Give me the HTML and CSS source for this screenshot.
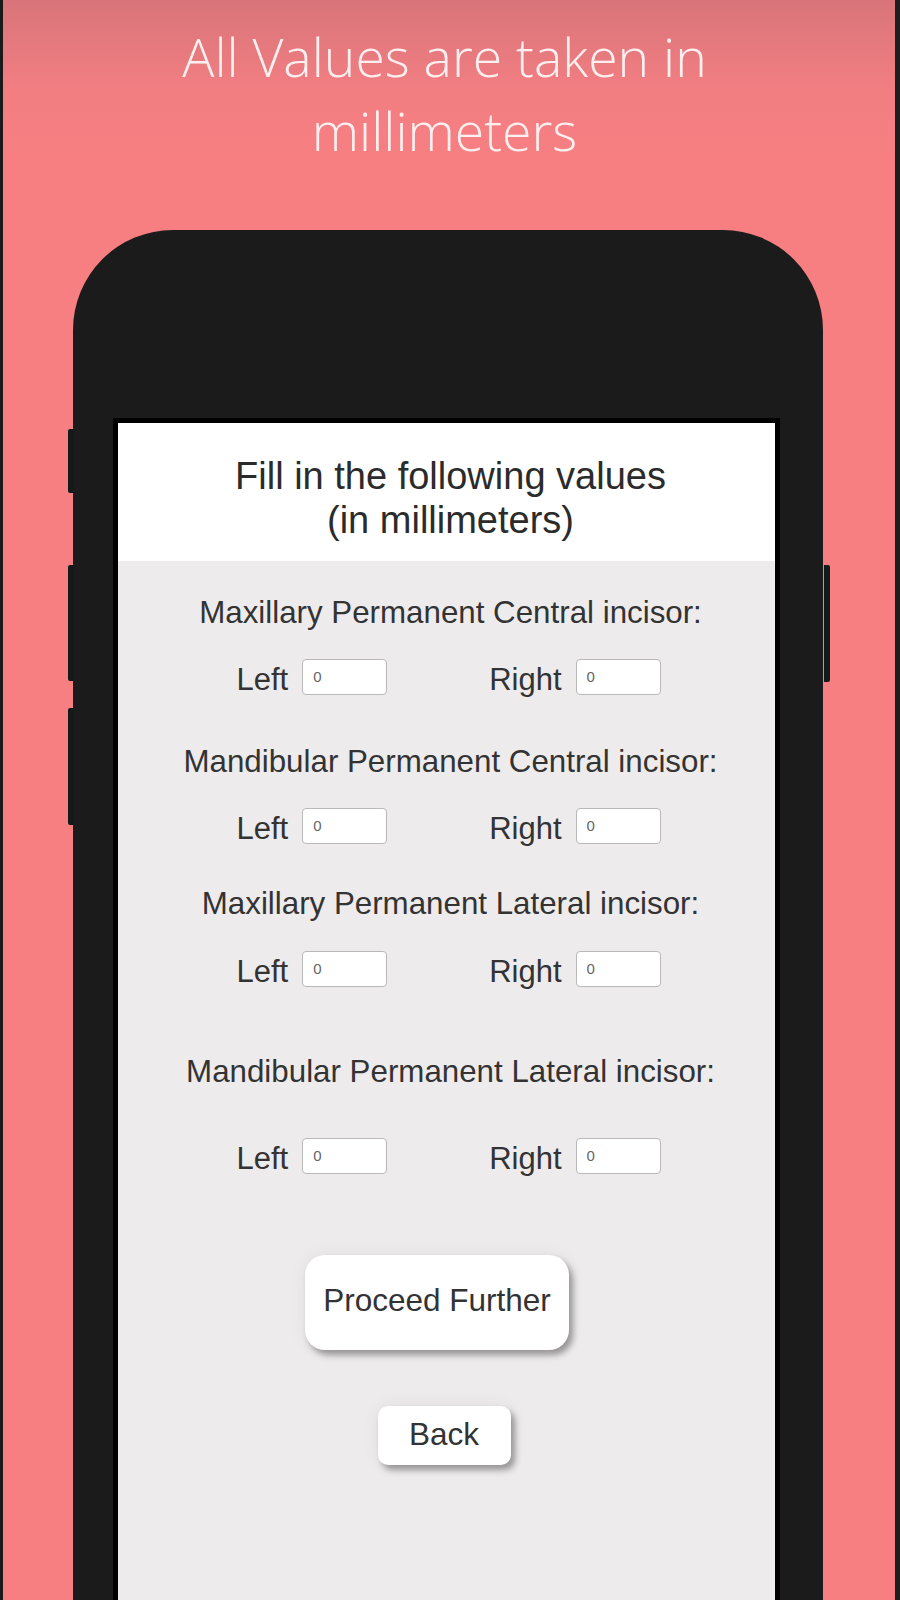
FILE: index.html
```html
<!DOCTYPE html>
<html lang="en">
<head>
<meta charset="utf-8">
<title>Fill in values</title>
<link rel="stylesheet" href="styles.css">
</head>
<body>
<div class="page">
  <h1 class="title">All Values are taken in<br>millimeters</h1>
  <div class="phone">
    <span class="side-btn side-l1"></span>
    <span class="side-btn side-l2"></span>
    <span class="side-btn side-l3"></span>
    <span class="side-btn side-r1"></span>
    <div class="screen">
      <div class="header">Fill in the following values<br>(in millimeters)</div>
      <div class="form">
        <div class="label l1">Maxillary Permanent Central incisor:</div>
        <div class="row r1">
          <div class="pair"><span class="side">Left</span><input class="box" type="text" value="0"></div>
          <div class="pair"><span class="side">Right</span><input class="box" type="text" value="0"></div>
        </div>
        <div class="label l2">Mandibular Permanent Central incisor:</div>
        <div class="row r2">
          <div class="pair"><span class="side">Left</span><input class="box" type="text" value="0"></div>
          <div class="pair"><span class="side">Right</span><input class="box" type="text" value="0"></div>
        </div>
        <div class="label l3">Maxillary Permanent Lateral incisor:</div>
        <div class="row r3">
          <div class="pair"><span class="side">Left</span><input class="box" type="text" value="0"></div>
          <div class="pair"><span class="side">Right</span><input class="box" type="text" value="0"></div>
        </div>
        <div class="label l4">Mandibular Permanent Lateral incisor:</div>
        <div class="row r4">
          <div class="pair"><span class="side">Left</span><input class="box" type="text" value="0"></div>
          <div class="pair"><span class="side">Right</span><input class="box" type="text" value="0"></div>
        </div>
        <button class="btn btn-proceed" type="button">Proceed Further</button>
        <button class="btn btn-back" type="button">Back</button>
      </div>
    </div>
  </div>
</div>
</body>
</html>
```
FILE: styles.css
```css
html, body {
  margin: 0;
  padding: 0;
}
body {
  width: 900px;
  height: 1600px;
  overflow: hidden;
  background: #1b1b1b;
}
.page {
  box-sizing: border-box;
  width: 900px;
  height: 1600px;
  border-left: 3px solid #1a1a1a;
  border-right: 5px solid #1e1e1e;
  background: linear-gradient(to bottom, #d8757a 0px, #f27e82 90px, #f77f82 160px, #f77f82 100%);
  overflow: hidden;
}
.title {
  margin: 0 6px 0 -3px;
  padding-top: 20px;
  height: 210px;
  text-align: center;
  font-family: "Open Sans", sans-serif;
  font-weight: 300;
  font-size: 53.5px;
  line-height: 74px;
  letter-spacing: 0;
  color: #fcefef;
}
.phone {
  position: relative;
  box-sizing: border-box;
  margin-left: 70px;
  width: 750px;
  height: 1400px;
  background: #1b1b1b;
  border-radius: 100px 100px 0 0;
  padding: 188px 43px 0 40px;
}
.side-btn {
  position: absolute;
  width: 6px;
  background: #141a19;
}
.side-l1 { left: -5px; top: 199px; height: 64px; border-radius: 2px 0 0 2px; }
.side-l2 { left: -5px; top: 335px; height: 116px; border-radius: 2px 0 0 2px; }
.side-l3 { left: -5px; top: 478px; height: 117px; border-radius: 2px 0 0 2px; }
.side-r1 { right: -7px; top: 335px; height: 117px; border-radius: 0 2px 2px 0; }
.screen {
  border: 5px solid #000;
  border-bottom: 0;
  height: 1300px;
  background: #eeebed;
  font-family: "Liberation Sans", Arial, sans-serif;
  color: #333;
}
.header {
  background: #fff;
  text-align: center;
  font-size: 38px;
  line-height: 44px;
  padding: 31px 0 19px 8px;
  color: #2b2b2b;
}
.form {
  display: flex;
  flex-direction: column;
  align-items: center;
}
.label {
  font-size: 31.3px;
  line-height: 36px;
  color: #333;
  text-align: center;
  margin-left: 8px;
}
.l1 { margin-top: 34px; }
.l2 { margin-top: 46px; }
.l3 { margin-top: 39px; }
.l4 { margin-top: 64px; }
.row {
  display: flex;
  gap: 102px;
  margin-left: 4px;
}
.r1 { margin-top: 25px; }
.r2 { margin-top: 25px; }
.r3 { margin-top: 26px; }
.r4 { margin-top: 45px; }
.pair {
  display: flex;
  align-items: center;
  gap: 14px;
}
.side {
  font-size: 31px;
  line-height: 36px;
  padding-top: 6px;
  color: #333;
}
.box {
  box-sizing: border-box;
  width: 85px;
  height: 36px;
  margin: 0;
  border: 1.5px solid #b9b9b9;
  border-radius: 4px;
  background: #fff;
  font-family: "Liberation Sans", Arial, sans-serif;
  font-size: 15px;
  color: #666;
  padding: 0 0 2px 10px;
  outline: none;
}
.btn {
  font-family: "Liberation Sans", Arial, sans-serif;
  color: #333;
  background: #fff;
  border: 0;
  cursor: pointer;
  box-shadow: 4px 5px 6px rgba(0, 0, 0, 0.35), 0 0 18px rgba(0, 0, 0, 0.06);
}
.btn-proceed {
  margin-top: 78px;
  margin-right: 19px;
  width: 264px;
  height: 95px;
  border-radius: 20px;
  font-size: 31.5px;
  padding: 0 0 4px 0;
}
.btn-back {
  margin-top: 56px;
  margin-right: 5px;
  width: 133px;
  height: 59px;
  border-radius: 10px;
  font-size: 31.5px;
  padding: 0 0 2px 0;
}
```
